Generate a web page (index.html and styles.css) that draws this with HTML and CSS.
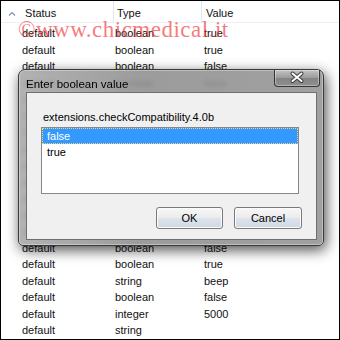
FILE: index.html
```html
<!DOCTYPE html>
<html lang="en-US">
	<head>
		<meta charset="utf-8">
		<title>about:config - Enter boolean value</title>
		<link rel="stylesheet" href="styles.css">
	</head>
	<body>
		<div class="screen">
			<div class="grid-head">
				<div class="hcell c1">
					<svg class="sort" width="8" height="5" viewBox="0 0 8 5"><polyline points="1,4.5 4,1.5 7,4.5" fill="none" stroke="#7e93ab" stroke-width="1.2"/></svg>
					Status
				</div>
				<div class="hcell c2">Type</div>
				<div class="hcell c3">Value</div>
			</div>
			<div class="rows">
				<div class="row"><span class="c1">default</span><span class="c2">boolean</span><span class="c3">true</span></div>
				<div class="row"><span class="c1">default</span><span class="c2">boolean</span><span class="c3">true</span></div>
				<div class="row"><span class="c1">default</span><span class="c2">boolean</span><span class="c3">false</span></div>
				<div class="row"><span class="c1">default</span><span class="c2">boolean</span><span class="c3">false</span></div>
				<div class="row"><span class="c1">default</span><span class="c2">boolean</span><span class="c3">true</span></div>
				<div class="row"><span class="c1">default</span><span class="c2">boolean</span><span class="c3">false</span></div>
				<div class="row"><span class="c1">default</span><span class="c2">integer</span><span class="c3">0</span></div>
				<div class="row"><span class="c1">default</span><span class="c2">boolean</span><span class="c3">true</span></div>
				<div class="row"><span class="c1">default</span><span class="c2">string</span><span class="c3">default</span></div>
				<div class="row"><span class="c1">default</span><span class="c2">boolean</span><span class="c3">false</span></div>
				<div class="row"><span class="c1">default</span><span class="c2">boolean</span><span class="c3">true</span></div>
				<div class="row"><span class="c1">default</span><span class="c2">integer</span><span class="c3">1</span></div>
				<div class="row"><span class="c1">default</span><span class="c2">boolean</span><span class="c3">true</span></div>
				<div class="row"><span class="c1">default</span><span class="c2">boolean</span><span class="c3">false</span></div>
				<div class="row"><span class="c1">default</span><span class="c2">boolean</span><span class="c3">true</span></div>
				<div class="row"><span class="c1">default</span><span class="c2">string</span><span class="c3">beep</span></div>
				<div class="row"><span class="c1">default</span><span class="c2">boolean</span><span class="c3">false</span></div>
				<div class="row"><span class="c1">default</span><span class="c2">integer</span><span class="c3">5000</span></div>
				<div class="row"><span class="c1">default</span><span class="c2">string</span><span class="c3"></span></div>
			</div>

			<div class="mark">&copy;www.chicmedical.it</div>

			<div class="dialog">
				<div class="titlebar">
					<span class="title">Enter boolean value</span>
					<button class="close" title="Close">
						<svg width="46" height="17" viewBox="0 0 46 17">
							<path d="M18.5 4.5 L27.5 12 M27.5 4.5 L18.5 12" stroke="#3b3b3b" stroke-width="4" stroke-linecap="round"/>
							<path d="M18.5 4.5 L27.5 12 M27.5 4.5 L18.5 12" stroke="#fff" stroke-width="2" stroke-linecap="round"/>
						</svg>
					</button>
				</div>
				<div class="client">
					<p class="prompt">extensions.checkCompatibility.4.0b</p>
					<ul class="listbox">
						<li class="selected">false</li>
						<li>true</li>
					</ul>
					<div class="actions">
						<button class="btn ok">OK</button>
						<button class="btn cancel">Cancel</button>
					</div>
				</div>
			</div>
		</div>
	</body>
</html>
```

FILE: styles.css
```css
body {
	margin: 0;
	background: #fff;
}
.screen {
	background: #fff;
	border: 1px solid #000;
	box-sizing: border-box;
	color: #111;
	font-family: "Liberation Sans", Arial, sans-serif;
	font-size: 11px;
	height: 340px;
	overflow: hidden;
	position: relative;
	width: 340px;
}

/* list header */
.grid-head,
.row {
	display: grid;
	grid-template-columns: 112px 88px 1fr;
}
.grid-head {
	border-bottom: 1px solid #eef0f2;
	height: 21px;
}
.hcell {
	line-height: 17px;
	padding-top: 4px;
	white-space: nowrap;
}
.hcell.c1 {
	padding-left: 7px;
}
.hcell.c2 {
	border-left: 1px solid #e3e6ea;
	padding-left: 3px;
}
.hcell.c3 {
	border-left: 1px solid #e3e6ea;
	padding-left: 4px;
}
.sort {
	margin-right: 6px;
	vertical-align: 1px;
}

/* list rows */
.rows {
	padding-top: 2px;
}
.row {
	height: 16.5px;
	line-height: 16.5px;
}
.row .c1 {
	padding-left: 21px;
}
.row .c2 {
	padding-left: 2px;
}
.row .c3 {
	padding-left: 3px;
}

/* watermark */
.mark {
	color: rgba(240, 55, 60, 0.68);
	font-family: "Liberation Serif", "Times New Roman", serif;
	font-size: 23px;
	left: 17px;
	letter-spacing: 0.5px;
	line-height: 23px;
	position: absolute;
	top: 17px;
	white-space: nowrap;
}

/* dialog */
.dialog {
	-webkit-backdrop-filter: blur(2px);
	backdrop-filter: blur(2px);
	background: linear-gradient(90deg, rgba(170, 170, 170, 0.9), rgba(145, 145, 145, 0.9) 40%, rgba(150, 150, 150, 0.9));
	border: 1px solid #3a3a3a;
	border-radius: 7px 7px 5px 5px;
	box-shadow: inset 0 0 0 1px rgba(255, 255, 255, 0.35), 2px 4px 14px rgba(0, 0, 0, 0.7);
	box-sizing: border-box;
	display: flex;
	flex-direction: column;
	height: 177px;
	left: 17px;
	position: absolute;
	top: 68px;
	width: 306px;
}
.titlebar {
	align-items: flex-start;
	display: flex;
	height: 22px;
	padding: 0 3px 0 7px;
}
.title {
	color: #000;
	font-size: 11.5px;
	line-height: 17px;
	padding-top: 6px;
}
.close {
	background: linear-gradient(180deg, #c4c4c4, #9a9a9a 50%, #858585 51%, #8e8e8e);
	border: 1px solid #353535;
	border-radius: 0 0 4px 4px;
	border-top: 0;
	box-shadow: inset 0 0 0 1px rgba(255, 255, 255, 0.35);
	height: 17px;
	margin-left: auto;
	padding: 0;
	width: 46px;
}
.close svg {
	display: block;
	margin: -1px 0 0 -1px;
}

.client {
	background: #f0f0f0;
	border: 1px solid #6f6f6f;
	box-sizing: border-box;
	display: flex;
	flex-direction: column;
	height: 148px;
	margin: 0 6px 0 7px;
	padding: 17px 14px 0 14px;
}
.prompt {
	color: #000;
	line-height: 14px;
	margin: 0 0 3px 2px;
}
.listbox {
	background: #fff;
	border: 1px solid #828790;
	box-sizing: border-box;
	height: 67px;
	list-style: none;
	margin: 0;
	padding: 0;
	width: 258px;
}
.listbox li {
	color: #000;
	height: 16px;
	line-height: 16px;
	padding-left: 5px;
}
.listbox li.selected {
	background: #3399ff;
	color: #fff;
	outline: 1px dotted #f4d27a;
	outline-offset: -1px;
}

.actions {
	display: flex;
	gap: 11px;
	justify-content: flex-end;
	margin-top: 13px;
}
.btn {
	background: linear-gradient(180deg, #f7f7f7, #ececec 48%, #dde4ec 52%, #cfd8e3);
	border: 1px solid #7a7a7a;
	border-radius: 3px;
	box-shadow: inset 0 0 0 1px #fbfbfb;
	color: #000;
	font-family: "Liberation Sans", Arial, sans-serif;
	font-size: 11px;
	height: 22px;
	padding: 0;
}
.ok {
	width: 67px;
}
.cancel {
	width: 68px;
}
```
